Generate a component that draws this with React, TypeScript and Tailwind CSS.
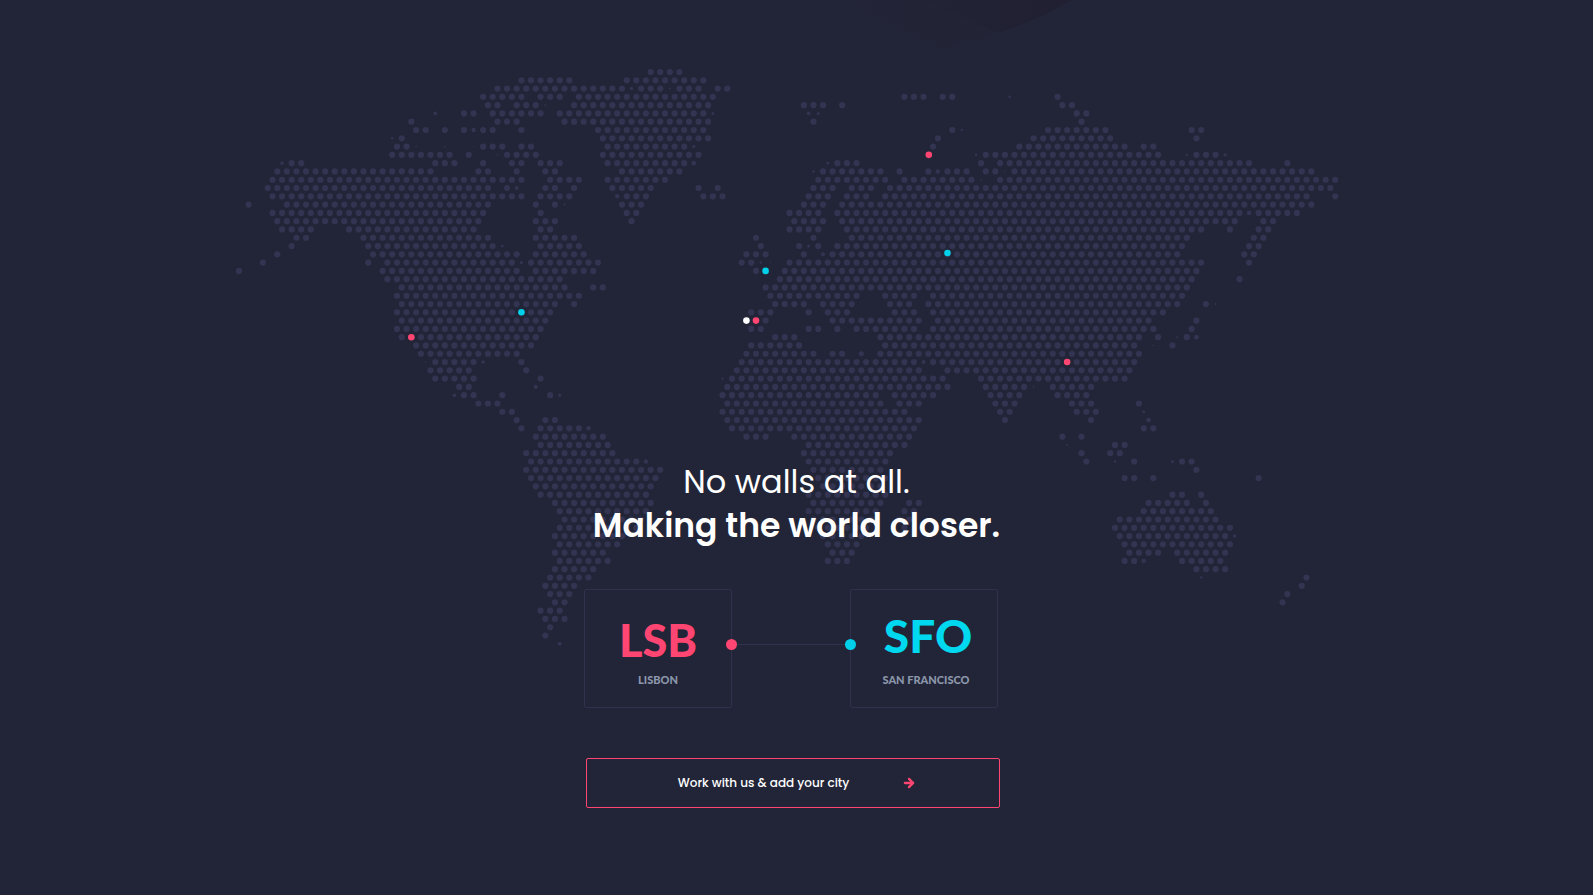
import { ArrowRight } from 'lucide-react';

// Land dots per row, as "start-end" column ranges. Columns advance by two
// because every second row is shifted by half a step.
const LAND = [
  '86-92',
  '59-69 81-97',
  '54-80 84-88 92-96 100-102',
  '51-59 63-67 71-99 139-143 147-149 171',
  '52-54 58-62 70-98 118-122 126 172-174',
  '47-49 53-63 67-97 175-177',
  '36 54-58 68-98 120 176',
  '37-39 43 47 51-53 59 75-97 149 169-181 199-201',
  '34 76-98 146 166-182 200',
  '33-35 51-55 59-61 77-93 145 163-185 189-191',
  '32-44 48 56-62 76-96 156-192 200-204',
  '11-13 41-45 51 57-59 63-67 77-93 125-129 155 159-211 219',
  '8-40 50-52 58 64-66 80-92 122-134 138 144 148-152 156-158 162-224',
  '7-59 65-71 77-89 121-135 139-153 159-229',
  '6-52 56 64-66 70 78-86 96 100 120-124 128-132 136-228',
  '7-59 63-69 81-85 97-101 119-123 127-131 135-223 229',
  '2 10-52 62 66 80-84 118-122 126-224',
  '7-51 63 81-83 115-121 125-209 213-221',
  '8-50 62-66 82 116-122 126-208 214-216',
  '9-15 23-49 63-65 115-121 127-201 207 213-215',
  '12-14 26-52 62-70 108 120 128-198 212-214',
  '11 27-53 63-71 109 117 121 125-197 211-213',
  '8 28-58 62-72 106-110 118 124-196 210-212',
  '5 27 31-57 61-75 105-107 115-201 211',
  '0 30-58 62-74 108 114-200',
  '31-67 113-199 209',
  '34-68 74-76 110-198',
  '33-71 111-129 135-141 145-197',
  '34-66 70 112-118 122-128 136-140 144-196 202',
  '33-65 107-111 119 123-127 137-141 145-193',
  '34-64 110 124-142 146-190 200',
  '33-63 107-109 119-121 125 129-141 145-191 199',
  '34-62 112-116 134-188 192 198',
  '37-61 107-117 135-187 195',
  '38-58 106-120 124-126 134-188',
  '41-49 59 105-141 145-187',
  '40-48 60 104-142 148-186',
  '41-49 63 103-147 155-185',
  '46-48 102-148 156-164 170-178',
  '47-49 55 65 101-133 137-145 157-163 171-177',
  '50-54 102-134 138-142 158-162 174-178 188',
  '55-57 101-139 159-161 175-179',
  '58 64-66 102-142 160 178',
  '59 63-71 103-141 189-191',
  '62-76 106-110 116-140 172 176',
  '63-77 119-139 183-185',
  '60-78 118-136 176 182-184',
  '61-83 119-135 177 187 197-199',
  '60-88 120-134 200',
  '61-87 121-135 185-187 191 213',
  '62-86 122-134',
  '63-85 119-135 195-197 201',
  '66-86 120-134 140-142 190-198 202',
  '67-85 119-133 139-141 189-203',
  '68-84 120-132 138-140 184-204',
  '67-83 121-131 139 183-207',
  '66-80 122-130 184-206',
  '67-79 123-129 185-207',
  '66-76 124-128 186-192 196-206',
  '67-77 123-127 185-187 197-205',
  '66-74 200-206',
  '65-73 223',
  '64-70 222',
  '65-69 219',
  '66-68 218',
  '63-67',
  '64-68',
  '65',
  '64',
];

// Coastline dots that are drawn smaller: [column, row, radius]
const COAST: [number, number, number][] = [
  [82, 2, 1.7], [90, 2, 1], [161, 3, 1.3], [64, 4, 1], [41, 5, 1.9], [119, 5, 1.9], [99, 5, 1.5],
  [121, 5, 1.5], [49, 7, 2.2], [151, 7, 1.2], [32, 8, 1.3], [95, 9, 1.6], [37, 9, 0.8], [43, 9, 0.9],
  [49, 9, 0.7], [54, 10, 0.8], [154, 10, 1.3], [198, 10, 1.2], [206, 10, 1.7], [9, 11, 1.8], [123, 11, 1.4],
  [95, 11, 2.3], [146, 12, 2.2], [120, 12, 1.3], [160, 12, 0.7], [155, 13, 0.8], [58, 14, 1.9], [79, 15, 2.2],
  [68, 16, 1], [211, 17, 2.3], [55, 21, 1.4], [119, 21, 1.6], [122, 22, 2], [59, 23, 1.7], [109, 23, 1.3],
  [111, 23, 0.7], [204, 28, 1], [196, 32, 1], [200, 32, 2.4], [191, 33, 0.8], [130, 34, 2.6], [39, 35, 0.7],
  [51, 35, 1.8], [143, 35, 2], [101, 37, 1.2], [62, 38, 2.1], [166, 38, 0.9], [45, 39, 1.8], [67, 39, 1.7],
  [189, 41, 1.5], [190, 42, 2.4], [73, 43, 2.3], [173, 45, 0.9], [85, 47, 2.2], [183, 47, 1.2], [195, 47, 1.5],
  [208, 56, 1.7], [189, 59, 2.3], [201, 61, 1.2], [67, 69, 2],
];

const CITIES: [number, number, string][] = [
  [36, 32, '#ff4571'],
  [59, 29, '#00d0ea'],
  [106, 30, '#ffffff'],
  [108, 30, '#ff4571'],
  [110, 24, '#00d0ea'],
  [144.1, 10, '#ff4571'],
  [148, 21.85, '#00d0ea'],
  [173, 35, '#ff4571'],
];

const colX = (c: number) => 5 + c * 4.787;
const rowY = (r: number) => 8 + r * 8.287;

const landDots = LAND.flatMap((row, r) =>
  row.split(' ').flatMap(part => {
    const [from, to = from] = part.split('-').map(Number);
    const dots: [number, number][] = [];
    for (let c = from; c <= to; c += 2) dots.push([c, r]);
    return dots;
  })
);

function WorldMap() {
  return (
    <svg viewBox="0 0 1125 590" className="w-[1125px] max-w-full" aria-hidden="true">
      <g fill="#333451">
        {landDots.map(([c, r]) => (
          <circle key={`${c}-${r}`} cx={colX(c)} cy={rowY(r)} r={3.1} />
        ))}
        {COAST.map(([c, r, size]) => (
          <circle key={`${c}-${r}`} cx={colX(c)} cy={rowY(r)} r={size} />
        ))}
      </g>
      {CITIES.map(([c, r, color]) => (
        <circle key={`${c}-${r}`} cx={colX(c)} cy={rowY(r)} r={3.3} fill={color} />
      ))}
    </svg>
  );
}

function TopShade() {
  return (
    <svg viewBox="0 0 300 60" className="w-[300px]" aria-hidden="true">
      <defs>
        <linearGradient id="shade" x1="0" y1="0" x2="1" y2="0">
          <stop offset="0" stopColor="#212033" stopOpacity="0.2" />
          <stop offset="0.6" stopColor="#212033" stopOpacity="0.8" />
          <stop offset="1" stopColor="#212033" />
        </linearGradient>
      </defs>
      <path d="M28 0 L142 48 Q220 32 272 0 Z" fill="url(#shade)" opacity="0.2" />
      <path d="M122 0 L198 33 Q238 20 272 0 Z" fill="url(#shade)" />
    </svg>
  );
}

export default function App() {
  return (
    <main className="grid min-h-screen grid-cols-1 grid-rows-1 bg-[#222537] font-['Poppins','Inter',sans-serif] text-white">
      <div className="col-start-1 row-start-1 flex items-start justify-center pl-[307px]">
        <TopShade />
      </div>
      <div className="col-start-1 row-start-1 flex items-start justify-center pt-16">
        <WorldMap />
      </div>

      <section className="relative col-start-1 row-start-1 flex flex-col items-center pt-[460px] pb-20">
        <h1 className="text-center leading-[44px]">
          <span className="block text-[32px] font-normal">No walls at all.</span>
          <strong className="block text-[33px] font-semibold">Making the world closer.</strong>
        </h1>

        {/* Route */}
        <div className="mt-[41px] mr-[11px] flex items-start font-['Lato',sans-serif] font-black">
          <div className="flex h-[119px] w-[148px] flex-col items-center rounded-xs border border-[#30324d] pt-6">
            <span className="text-[45px] leading-[52px] text-[#ff4571]">LSB</span>
            <span className="mt-1 text-[11px] leading-5 text-[#8c97ab]">LISBON</span>
          </div>
          <div className="relative z-10 -mx-1.5 flex h-[110px] w-[130px] items-center">
            <span className="size-[11px] rounded-full bg-[#ff4571]" />
            <span className="h-px flex-1 bg-[#30324d]" />
            <span className="size-[11px] rounded-full bg-[#00d0ea]" />
          </div>
          <div className="flex h-[119px] w-[148px] flex-col items-center rounded-xs border border-[#30324d] pt-5">
            <span className="pl-2 text-[46px] leading-[52px] text-[#00d8f0]">SFO</span>
            <span className="mt-2 pl-1 text-[11px] leading-5 text-[#8c97ab]">SAN FRANCISCO</span>
          </div>
        </div>

        <button
          type="button"
          className="mt-[50px] mr-[7px] flex h-[50px] w-[414px] max-w-full items-center justify-center gap-[53px] rounded-xs border border-[#ff4571] pl-2 text-xs font-medium"
        >
          Work with us &amp; add your city
          <ArrowRight className="size-3.5 text-[#ff4571]" strokeWidth={4} />
        </button>
      </section>
    </main>
  );
}
